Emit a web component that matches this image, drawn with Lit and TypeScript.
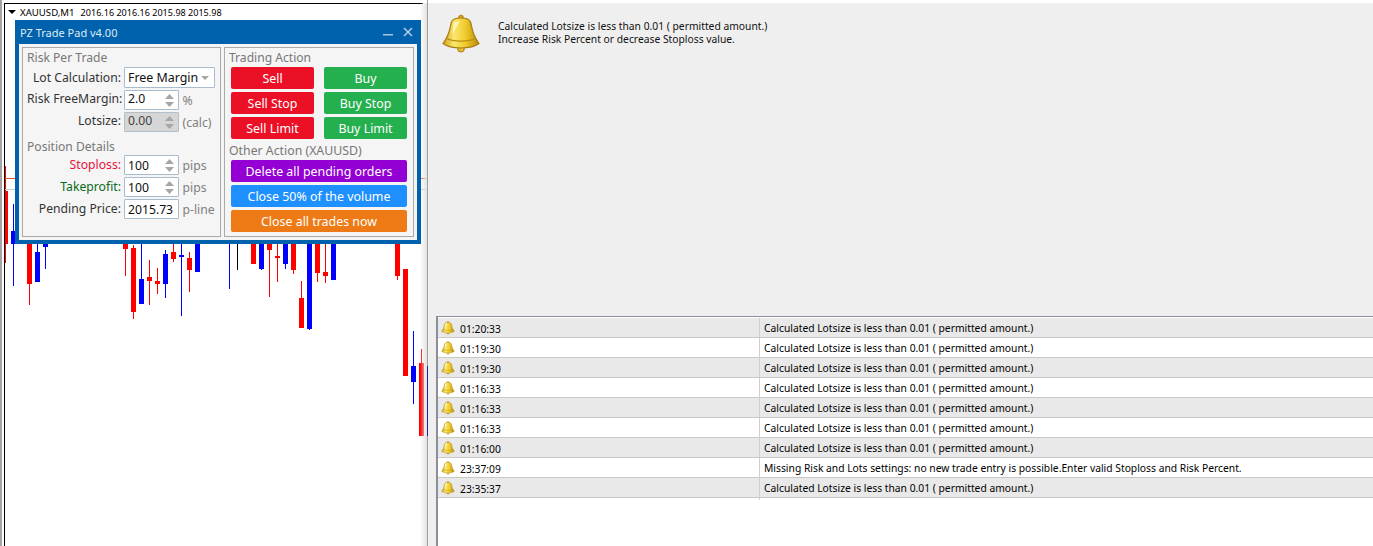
import { LitElement, html, css, svg } from "lit";
import { customElement } from "lit/decorators.js";

type C = [number, number, number, number, number, string, number?];
const R = "#ff0000", B = "#0000ff";
// x, bodyTop, bodyBottom, wickTop, wickBottom, colour, bodyWidth
const candles: C[] = [
  [5, 191, 244, 166, 263, R, 3],
  [11, 231, 244, 204, 286, B, 5],
  [27, 240, 284, 240, 305, R],
  [35, 252, 282, 240, 252, B],
  [43, 243, 247, 243, 269, B],
  [123, 240, 249, 240, 276, R],
  [131, 248, 312, 245, 319, R],
  [139, 279, 304, 244, 304, B],
  [147, 277, 281, 260, 305, R],
  [155, 281, 284, 268, 294, R],
  [163, 254, 284, 250, 298, B],
  [171, 252, 259, 244, 262, R],
  [179, 255, 257, 244, 316, B],
  [187, 258, 270, 252, 292, R],
  [195, 240, 272, 240, 272, B],
  [251, 240, 264, 240, 264, R],
  [259, 240, 269, 240, 270, B],
  [267, 240, 250, 240, 297, R],
  [275, 256, 258, 244, 282, R],
  [283, 240, 264, 240, 269, B],
  [291, 240, 270, 240, 274, R],
  [299, 298, 328, 281, 328, R],
  [307, 240, 329, 240, 330, B],
  [315, 240, 273, 240, 282, R],
  [323, 272, 276, 244, 283, R],
  [331, 240, 280, 240, 280, B],
  [395, 240, 276, 240, 280, R],
  [403, 269, 376, 269, 376, R],
  [411, 366, 382, 331, 404, B],
  [419, 363, 436, 349, 436, R],
];

const bell = (size: number) => html`<svg class="bell" width=${size} height=${size} viewBox="0 0 40 40">
  <defs>
    <linearGradient id="g" x1="0" x2="1" y1="0" y2="0">
      <stop offset="0" stop-color="#cfa010"/>
      <stop offset=".3" stop-color="#fbe870"/>
      <stop offset=".62" stop-color="#f0cb2c"/>
      <stop offset="1" stop-color="#ba8c08"/>
    </linearGradient>
  </defs>
  <ellipse cx="20" cy="35" rx="3.300" ry="3" fill="#e8bd34" stroke="#a67c12" stroke-width="1"/>
  <circle cx="20" cy="3.500" r="2.400" fill="#d2a520" stroke="#a67c12" stroke-width=".8"/>
  <path d="M20 4C15 4 11.500 5 10.500 8C9 12 9.500 20 2 29.500C6 32.500 13 34 20 34C27 34 34 32.500 38 29.500C30.500 20 31 12 29.500 8C28.500 5 25 4 20 4Z" fill="url(#g)" stroke="#a67c12" stroke-width="1.200"/>
  <path d="M6 24.500C11 28 29 28 34 24.500" fill="none" stroke="#ba8f14" stroke-width="1.400"/>
  <path d="M13 8.500L19 7L11.500 20Z" fill="#fffbd0" opacity=".75"/>
</svg>`;

const spin = html`<svg class="spin" width="9" height="13" viewBox="0 0 9 13"><path d="M4.500 0L9 5H0ZM0 8H9L4.500 13Z" fill="#a6a6a6"/></svg>`;

const logs: [string, string][] = [
  ["01:20:33", "Calculated Lotsize is less than 0.01 ( permitted amount.)"],
  ["01:19:30", "Calculated Lotsize is less than 0.01 ( permitted amount.)"],
  ["01:19:30", "Calculated Lotsize is less than 0.01 ( permitted amount.)"],
  ["01:16:33", "Calculated Lotsize is less than 0.01 ( permitted amount.)"],
  ["01:16:33", "Calculated Lotsize is less than 0.01 ( permitted amount.)"],
  ["01:16:33", "Calculated Lotsize is less than 0.01 ( permitted amount.)"],
  ["01:16:00", "Calculated Lotsize is less than 0.01 ( permitted amount.)"],
  ["23:37:09", "Missing Risk and Lots settings: no new trade entry is possible.Enter valid Stoploss and Risk Percent."],
  ["23:35:37", "Calculated Lotsize is less than 0.01 ( permitted amount.)"],
];

@customElement("app-root")
export class AppRoot extends LitElement {
  static styles = css`
    :host { display: block; width: 1373px; height: 546px; overflow: hidden; background: #fff;
      font-family: "Noto Sans", "Open Sans", sans-serif; color: #000; }
    .page { display: flex; width: 1373px; height: 546px; }

    .chart { position: relative; flex: 0 0 428px; height: 546px; background: #fff; box-sizing: border-box;
      padding: 3px 0 0 4px; box-shadow: inset 2px 0 #a4a4a4, inset -1px 0 #a0a0a0; }
    .chart::after { content: ""; position: absolute; top: 3px; bottom: 0; right: 1px; width: 7px;
      background: linear-gradient(90deg, rgba(225,225,225,0), #e2e2e2); }
    .frame { height: 543px; border-left: 1px solid #000; border-top: 1px solid #000; margin-right: 5px; }
    .head { display: flex; align-items: center; height: 16px; padding-left: 3px; font-size: 9.650px; }
    .tri { width: 0; height: 0; border-left: 4px solid transparent; border-right: 4px solid transparent; border-top: 4px solid #000; margin-right: 4px; }
    .quote { margin-left: 6px; font-size: 9.050px; }
    .plot { position: absolute; left: 0; top: 0; }

    .win { position: absolute; left: 15px; top: 20px; width: 406px; height: 224px; box-sizing: border-box;
      background: #0062ad; padding: 0 4px 4px; display: flex; flex-direction: column; z-index: 2; }
    .title { flex: 0 0 24px; display: flex; align-items: center; color: #dfe9f3; font-size: 11px; padding-left: 1px; }
    .title span { flex: 1; }
    .title svg { margin-right: 4px; margin-left: 6px; }
    .body { flex: 1; background: #f4f4f4; display: flex; gap: 3px; padding: 3px; }
    .group { border: 1px solid #aaa; box-sizing: border-box; height: 190px; background: #f5f5f5; }
    .g1 { width: 199px; padding: 0 0 0 4px; }
    .g2 { width: 190px; padding: 0 0 0 4px; }
    .h { color: #777; font-size: 12.100px; line-height: 18px; height: 18px; margin-top: 1px; }
    .rows { display: grid; grid-template-columns: 94px auto; row-gap: 2px; column-gap: 3px; justify-content: start; align-items: center; }
    .lab { text-align: right; font-size: 12.200px; line-height: 19px; padding-bottom: 1px; color: #333; white-space: nowrap; }
    .lab.up { line-height: 17px; padding-bottom: 3px; }
    .lab.red { color: #e8133c; }
    .lab.green { color: #0b6a17; }
    .ctl { display: flex; align-items: center; }
    .box { box-sizing: border-box; height: 20px; width: 55px; border: 1px solid #a9bccd; background: #fff; border-radius: 1px;
      display: flex; align-items: center; justify-content: space-between; padding: 0 4px 0 3px; font-size: 12.200px; color: #111; }
    .box.up { line-height: 16px; }
    .box.up > span { position: relative; bottom: 1px; }
    .box.sel { width: 91px; height: 21px; padding-right: 5px; font-size: 12.400px; }
    .box.off { background: #d6d6d6; border-color: #b5bfc9; color: #444; }
    .caret { width: 0; height: 0; border-left: 4px solid transparent; border-right: 4px solid transparent; border-top: 4px solid #a6a6a6; }
    .suf { color: #808080; font-size: 12.200px; margin-left: 3.500px; white-space: nowrap; }
    .spin { flex: none; }
    .h2 { margin-top: 5px; height: 18px; line-height: 20px; color: #777; font-size: 12.100px; }

    .btns { display: grid; grid-template-columns: 83px 83px; column-gap: 10px; row-gap: 3px; padding-left: 2px; }
    .wide { display: grid; grid-template-columns: 176px; row-gap: 3px; padding-left: 2px; }
    .btn { height: 22px; border-radius: 2px; color: #fff; font-size: 12.400px; display: flex; align-items: center; justify-content: center; }
    .b-red { background: #ec1026; }
    .b-green { background: #25b04f; }
    .b-pur { background: #9400d3; }
    .b-blue { background: #1e90ff; }
    .b-org { background: #ed7a14; }
    .h3 { color: #777; font-size: 12.300px; height: 21px; line-height: 23px; }

    .right { flex: 1; min-width: 0; margin-top: 3px; height: 543px; background: #efefef; display: flex; flex-direction: column; padding-left: 8px; font-size: 10.300px; }
    .alert { flex: 0 0 313px; display: flex; box-sizing: border-box; padding: 11px 0 0 5px; }
    .alert .msg { margin-left: 17px; padding-top: 6px; line-height: 13px; color: #111; }
    .table { flex: 1; background: #fff; border-top: 1px solid #8a8f9a; border-left: 2px solid #8a8f9a; padding: 1px 0 0 0; }
    .row { display: grid; grid-template-columns: 322px 1fr; height: 20px; box-sizing: border-box; border-bottom: 1px solid #c8c8c8; background: #fff; align-items: stretch; line-height: 21px; }
    .row:nth-child(odd) { background: #e9e9e9; }
    .c1 { display: flex; align-items: center; gap: 5px; padding: 1px 0 0 3px; border-right: 1px solid #cfcfcf; }
    .c1 .bell { margin-top: -3px; }
    .c2 { padding-left: 4px; white-space: nowrap; }
  `;

  render() {
    return html`<div class="page">
      <section class="chart">
        <svg class="plot" width="428" height="546" viewBox="0 0 428 546">
          ${candles.map(([x, t, b, wt, wb, c, w]) => {
            const bw = w ?? 5;
            const wx = bw === 5 ? x + 2 : x;
            return svg`<rect x=${wx} y=${wt} width="1" height=${wb - wt} fill=${c}/><rect x=${x} y=${t} width=${bw} height=${b - t} fill=${c}/>`;
          })}
          <rect x="229" y="240" width="1" height="49" fill="#0000ff"/>
          <rect x="237" y="240" width="1" height="30" fill="#000"/>
          <rect x="5" y="178" width="10" height="1" fill="#e8532a"/>
          <rect x="421" y="178" width="6" height="1" fill="#e8532a"/>
          <rect x="5" y="189" width="10" height="1" fill="#c8c8c8"/>
          <rect x="421" y="189" width="6" height="1" fill="#c8c8c8"/>
          <rect x="427" y="366" width="1" height="70" fill="#2323a8"/>
        </svg>
        <div class="frame">
          <div class="head"><i class="tri"></i><span>XAUUSD,M1</span><span class="quote">2016.16 2016.16 2015.98 2015.98</span></div>
        </div>
        <div class="win">
          <div class="title"><span>PZ Trade Pad v4.00</span>
            <svg width="10" height="10" viewBox="0 0 10 10"><rect x="0" y="7" width="10" height="1.500" fill="#a9c4dc"/></svg>
            <svg width="10" height="10" viewBox="0 0 10 10"><path d="M1 1L9 9M9 1L1 9" stroke="#b8cfe3" stroke-width="1.500"/></svg>
          </div>
          <div class="body">
            <div class="group g1">
              <div class="h">Risk Per Trade</div>
              <div class="rows">
                <div class="lab">Lot Calculation:</div>
                <div class="ctl"><div class="box sel">Free Margin<i class="caret"></i></div></div>
                <div class="lab up">Risk FreeMargin:</div>
                <div class="ctl"><div class="box up"><span>2.0</span>${spin}</div><span class="suf">%</span></div>
                <div class="lab up">Lotsize:</div>
                <div class="ctl"><div class="box off up"><span>0.00</span>${spin}</div><span class="suf">(calc)</span></div>
              </div>
              <div class="h2">Position Details</div>
              <div class="rows">
                <div class="lab red">Stoploss:</div>
                <div class="ctl"><div class="box">100${spin}</div><span class="suf">pips</span></div>
                <div class="lab green">Takeprofit:</div>
                <div class="ctl"><div class="box">100${spin}</div><span class="suf">pips</span></div>
                <div class="lab">Pending Price:</div>
                <div class="ctl"><div class="box">2015.73</div><span class="suf">p-line</span></div>
              </div>
            </div>
            <div class="group g2">
              <div class="h">Trading Action</div>
              <div class="btns">
                <div class="btn b-red">Sell</div><div class="btn b-green">Buy</div>
                <div class="btn b-red">Sell Stop</div><div class="btn b-green">Buy Stop</div>
                <div class="btn b-red">Sell Limit</div><div class="btn b-green">Buy Limit</div>
              </div>
              <div class="h3">Other Action (XAUUSD)</div>
              <div class="wide">
                <div class="btn b-pur">Delete all pending orders</div>
                <div class="btn b-blue">Close 50% of the volume</div>
                <div class="btn b-org">Close all trades now</div>
              </div>
            </div>
          </div>
        </div>
      </section>
      <section class="right">
        <div class="alert">
          ${bell(40)}
          <div class="msg">Calculated Lotsize is less than 0.01 ( permitted amount.)<br>Increase Risk Percent or decrease Stoploss value.</div>
        </div>
        <div class="table">
          ${logs.map(([t, m]) => html`<div class="row"><div class="c1">${bell(14)}<span>${t}</span></div><div class="c2">${m}</div></div>`)}
        </div>
      </section>
    </div>`;
  }
}
